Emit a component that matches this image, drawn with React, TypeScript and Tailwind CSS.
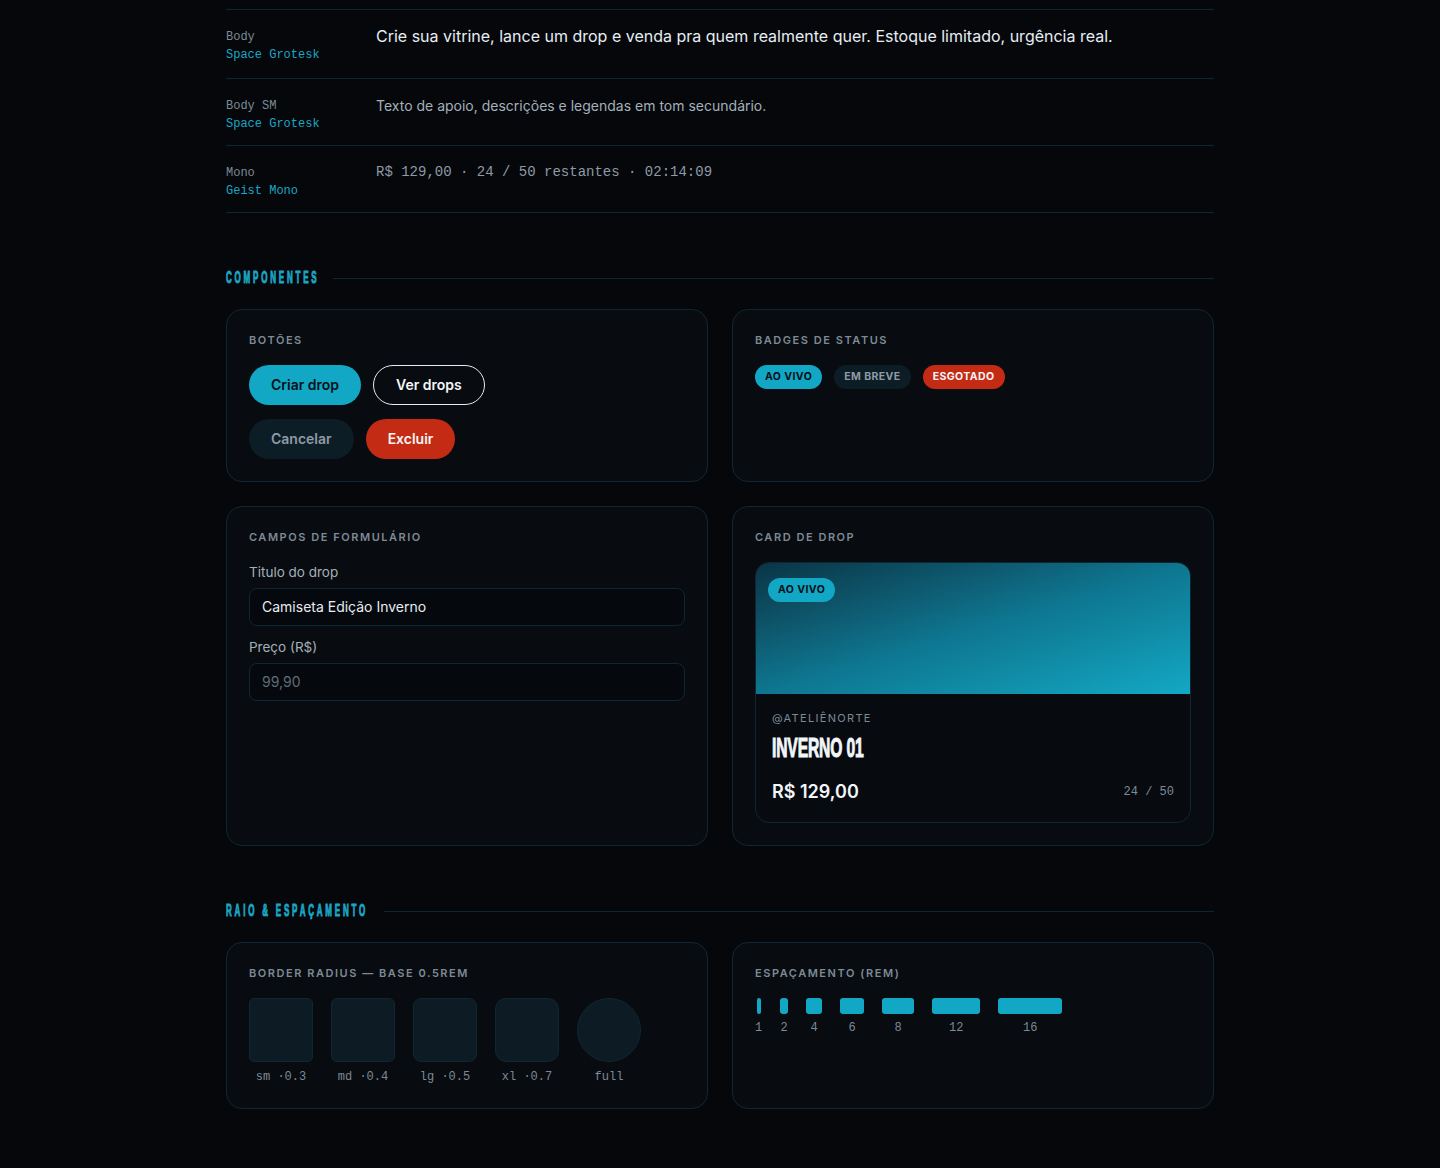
import React from 'react'

const sans = 'font-["Inter","Noto_Sans",sans-serif]'
const mono = 'font-["Liberation_Mono","DejaVu_Sans_Mono",monospace]'
const display = 'font-["Liberation_Sans","Arial",sans-serif]'

function TypeRow({ name, family, pb, children }: { name: string; family: string; pb: string; children: React.ReactNode }) {
  return (
    <div className={`flex items-start border-b border-[#0f2733] pt-[18px] ${pb}`}>
      <div className={`w-[150px] shrink-0 text-xs leading-[18px] ${mono}`}>
        <div className="text-[#7d8a95]">{name}</div>
        <div className="text-[#1ba6c4]">{family}</div>
      </div>
      <div className="flex-1">{children}</div>
    </div>
  )
}

// condensed display face is not installed, so squeeze Liberation Sans Bold
function SectionTitle({ children, width }: { children: React.ReactNode; width: string }) {
  return (
    <div className="flex items-center gap-3">
      <div className={`flex h-4 shrink-0 items-center whitespace-nowrap leading-4 ${width}`}>
        <h2 className={`inline-block origin-left scale-x-[0.5] text-[16px] leading-4 font-bold uppercase tracking-[0.35em] text-[#1ba6c4] [-webkit-text-stroke:1px_#1ba6c4] ${display}`}>
          {children}
        </h2>
      </div>
      <div className="h-px flex-1 bg-[#0f2733]" />
    </div>
  )
}

function Card({ title, children }: { title: string; children?: React.ReactNode }) {
  return (
    <div className="rounded-2xl border border-[#0f2733] bg-[#080b10] p-[22px]">
      <div className="mb-[17px] text-[11px] leading-4 font-semibold uppercase tracking-[0.14em] text-[#7d8a95]">{title}</div>
      {children}
    </div>
  )
}

function Badge({ className, children }: { className: string; children: React.ReactNode }) {
  return (
    <span className={`inline-flex h-6 items-center rounded-full px-[10px] text-[10.5px] font-bold uppercase tracking-[0.04em] ${className}`}>
      {children}
    </span>
  )
}

const radii = [
  { label: 'sm ·0.3', cls: 'rounded-[5px]' },
  { label: 'md ·0.4', cls: 'rounded-[6px]' },
  { label: 'lg ·0.5', cls: 'rounded-[8px]' },
  { label: 'xl ·0.7', cls: 'rounded-[11px]' },
  { label: 'full', cls: 'rounded-full' },
]

const spacing = [
  { n: '1', cls: 'w-[4px]' },
  { n: '2', cls: 'w-[8px]' },
  { n: '4', cls: 'w-[16px]' },
  { n: '6', cls: 'w-[24px]' },
  { n: '8', cls: 'w-[32px]' },
  { n: '12', cls: 'w-[48px]' },
  { n: '16', cls: 'w-[64px]' },
]

export default function App() {
  return (
    <div className={`min-h-[1168px] bg-[#05070b] text-[#e6edf3] ${sans}`}>
      <div className="mx-auto w-[988px] pt-[9px] pb-[60px]">
        {/* Tipografia */}
        <div className="border-t border-[#0f2733]">
          <TypeRow name="Body" family="Space Grotesk" pb="pb-[14px]">
            <p className="text-base leading-[16px] text-[#e6edf3]">
              Crie sua vitrine, lance um drop e venda pra quem realmente quer. Estoque limitado, urgência real.
            </p>
          </TypeRow>
          <TypeRow name="Body SM" family="Space Grotesk" pb="pb-[12px]">
            <p className="text-sm leading-[18px] text-[#a4b0ba]">Texto de apoio, descrições e legendas em tom secundário.</p>
          </TypeRow>
          <TypeRow name="Mono" family="Geist Mono" pb="pb-[12px]">
            <p className={`text-sm leading-[16px] text-[#8e9aa5] ${mono}`}>R$ 129,00 · 24 / 50 restantes · 02:14:09</p>
          </TypeRow>
        </div>

        {/* Componentes */}
        <div className="mt-[57px]">
          <SectionTitle width="w-[95px]">Componentes</SectionTitle>
          <div className="mt-[23px] grid grid-cols-2 gap-6">
            <Card title="Botões">
              <div className="flex flex-col gap-[14px]">
                <div className="flex gap-3">
                  <button className="h-10 rounded-full bg-[#12a7c4] px-[22px] text-sm font-semibold text-[#061018]">Criar drop</button>
                  <button className="h-10 rounded-full border border-[#e6edf3] px-[22px] text-sm font-semibold text-[#f2f6f9]">Ver drops</button>
                </div>
                <div className="flex gap-3">
                  <button className="h-10 rounded-full bg-[#0c1d26] px-[22px] text-sm font-semibold text-[#8e9aa5]">Cancelar</button>
                  <button className="h-10 rounded-full bg-[#c32b15] px-[22px] text-sm font-semibold text-[#f5f5f5]">Excluir</button>
                </div>
              </div>
            </Card>
            <Card title="Badges de status">
              <div className="flex gap-3">
                <Badge className="bg-[#12a7c4] text-[#061018]">Ao vivo</Badge>
                <Badge className="bg-[#0c1d26] text-[#8e9aa5]">Em breve</Badge>
                <Badge className="bg-[#c32b15] text-[#f5f5f5]">Esgotado</Badge>
              </div>
            </Card>

            <Card title="Campos de formulário">
              <div className="flex flex-col gap-[11px]">
                <label className="flex flex-col gap-[6px]">
                  <span className="text-[13.5px] leading-5 text-[#a4b0ba]">Titulo do drop</span>
                  <div className="flex h-[38px] items-center rounded-lg border border-[#0f2733] bg-[#05080c] px-3 text-sm text-[#e6edf3]">
                    Camiseta Edição Inverno
                  </div>
                </label>
                <label className="flex flex-col gap-[6px]">
                  <span className="text-[13.5px] leading-5 text-[#a4b0ba]">Preço (R$)</span>
                  <div className="flex h-[38px] items-center rounded-lg border border-[#0f2733] bg-[#05080c] px-3 text-sm text-[#5f6d78]">
                    99,90
                  </div>
                </label>
              </div>
            </Card>
            <Card title="Card de drop">
              <div className="overflow-hidden rounded-[14px] border border-[#0f2733] bg-[#070a0f]">
                <div className="relative h-[131px] bg-linear-to-br from-[#0a3546] via-[#0e7690] to-[#13a8c4]">
                  <div className="absolute left-3 top-3">
                    <Badge className="bg-[#12a7c4] text-[#061018]">Ao vivo</Badge>
                  </div>
                </div>
                <div className="px-4 pt-4 pb-[18px]">
                  <div className="text-[11px] leading-4 uppercase tracking-[0.12em] text-[#7d8a95]">@ateliênorte</div>
                  <div className="mt-2 h-7 whitespace-nowrap">
                    <span className={`inline-block origin-left scale-x-[0.58] text-[27px] leading-7 font-bold uppercase tracking-[-0.01em] text-[#f2f6f9] [-webkit-text-stroke:1px_#f2f6f9] ${display}`}>
                      Inverno 01
                    </span>
                  </div>
                  <div className="mt-[18px] flex items-center justify-between">
                    <span className="text-lg leading-6 font-semibold text-[#f2f6f9]">R$ 129,00</span>
                    <span className={`text-xs text-[#7d8a95] ${mono}`}>24 / 50</span>
                  </div>
                </div>
              </div>
            </Card>
          </div>
        </div>

        {/* Raio & espaçamento */}
        <div className="mt-[57px]">
          <SectionTitle width="w-[146px]">Raio &amp; Espaçamento</SectionTitle>
          <div className="mt-[23px] grid grid-cols-2 gap-6">
            <Card title="Border radius — base 0.5rem">
              <div className="flex gap-[18px]">
                {radii.map(r => (
                  <div key={r.label} className="flex flex-col items-center gap-[6px]">
                    <div className={`h-16 w-16 border border-[#0f2733] bg-[#0c1b24] ${r.cls}`} />
                    <span className={`text-xs leading-[18px] text-[#7d8a95] ${mono}`}>{r.label}</span>
                  </div>
                ))}
              </div>
            </Card>
            <Card title="Espaçamento (rem)">
              <div className="flex items-start gap-[18px]">
                {spacing.map(s => (
                  <div key={s.n} className="flex flex-col items-center gap-[6px]">
                    <div className={`h-4 rounded-[3px] bg-[#12a7c4] ${s.cls}`} />
                    <span className={`text-xs leading-4 text-[#7d8a95] ${mono}`}>{s.n}</span>
                  </div>
                ))}
              </div>
            </Card>
          </div>
        </div>
      </div>
    </div>
  )
}
